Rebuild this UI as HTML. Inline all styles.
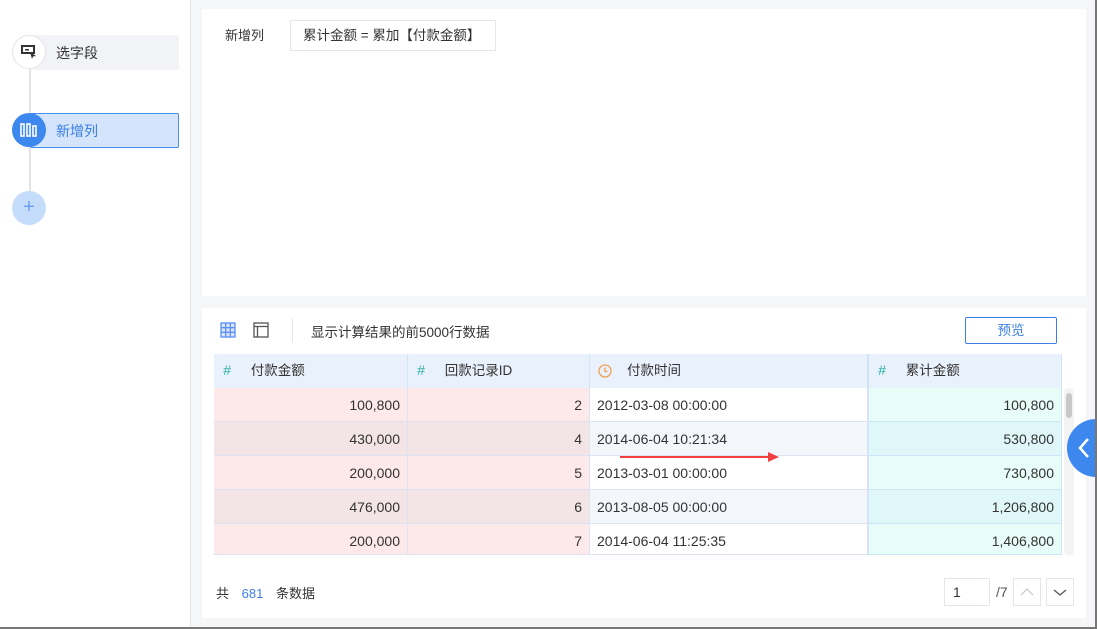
<!DOCTYPE html>
<html><head><meta charset="utf-8"><style>
*{margin:0;padding:0;box-sizing:border-box}
body{width:1097px;height:629px;position:relative;overflow:hidden;background:#f5f6f8;font-family:"Liberation Sans","Noto Sans CJK SC",sans-serif;font-size:13px;color:#333}
.abs{position:absolute}
.left{left:0;top:0;width:191px;height:629px;background:#fff;border-right:1px solid #e2e3e6}
.circ{position:absolute;border-radius:50%;width:34px;height:34px}
.cell{position:absolute;height:34px;line-height:34px;padding:0 7px;border-bottom:1px solid #dde3f3;border-right:1px solid #dde3f3;white-space:nowrap;font-size:14px}
.r{text-align:right}
.hd{position:absolute;top:354px;height:34px;line-height:33px;background:#e9f1fc;border-right:1px solid #d5e3f7;font-size:13.5px}
.hash{color:#2ab0a0;font-style:italic;margin:0 20px 0 9px;font-size:14px}
</style></head><body>
<div class="abs left">
 <div class="abs" style="left:29px;top:52px;width:2px;height:160px;background:#e4e4e6"></div>
 <div class="abs" style="left:30px;top:35px;width:149px;height:35px;background:#f2f3f6;border-radius:2px"></div>
 <div class="circ" style="left:12px;top:35px;background:#fff;border:1px solid #e4e4e6"></div>
 <svg class="abs" style="left:21px;top:44px" width="16" height="16"><rect x="1" y="2" width="12" height="7" fill="none" stroke="#333" stroke-width="2"/><rect x="4" y="5" width="4" height="1.5" fill="#333"/><path d="M9 8 L15 12 L12 12.5 L11 15 Z" fill="#333"/></svg>
 <div class="abs" style="left:56px;top:43px;font-size:14px;color:#333">选字段</div>
 <div class="abs" style="left:30px;top:113px;width:149px;height:35px;background:#d4e5fb;border:1px solid #4a8ff0;border-radius:2px"></div>
 <div class="circ" style="left:12px;top:113px;background:#3d88ee"></div>
 <svg class="abs" style="left:20px;top:121px" width="18" height="18"><g fill="none" stroke="#fff" stroke-width="1.6"><rect x="1" y="3" width="3" height="12"/><rect x="7" y="3" width="3" height="12"/><rect x="13" y="5" width="3" height="10"/></g></svg>
 <div class="abs" style="left:56px;top:121px;font-size:14px;color:#3a7ee6">新增列</div>
 <div class="circ" style="left:12px;top:191px;background:#c5dcfb;color:#6d9ff0;text-align:center;line-height:32px;font-size:20px;font-weight:300">+</div>
</div>
<div class="abs" style="left:202px;top:9px;width:884px;height:287px;background:#fff"></div>
<div class="abs" style="left:225px;top:25px;font-size:13px">新增列</div>
<div class="abs" style="left:290px;top:20px;width:206px;height:31px;border:1px solid #e4e6ea;line-height:29px;padding-left:12px;font-size:13.5px">累计金额 = 累加【付款金额】</div>
<div class="abs" style="left:202px;top:308px;width:884px;height:310px;background:#fff"></div>
<svg class="abs" style="left:220px;top:322px" width="16" height="16"><g fill="none" stroke="#5b8ef5" stroke-width="1.3"><rect x="1" y="1" width="14" height="14" fill="#dbe6fd"/><path d="M1 5.7H15M1 10.3H15M5.7 1V15M10.3 1V15"/></g></svg>
<svg class="abs" style="left:253px;top:322px" width="16" height="16"><g fill="none" stroke="#555" stroke-width="1.3"><rect x="1" y="1" width="14" height="14"/><path d="M1 4.5H15M4.5 4.5V15"/></g></svg>
<div class="abs" style="left:292px;top:318px;width:1px;height:24px;background:#e8e8ea"></div>
<div class="abs" style="left:311px;top:321px;font-size:13.5px">显示计算结果的前5000行数据</div>
<div class="abs" style="left:965px;top:317px;width:92px;height:27px;border:1px solid #3d7fe6;border-radius:2px;color:#3d7fe6;text-align:center;line-height:25px;font-size:13.5px">预览</div>

<div class="hd" style="left:214px;width:194px"><span class="hash">#</span>付款金额</div>
<div class="hd" style="left:408px;width:182px"><span class="hash">#</span>回款记录ID</div>
<div class="hd" style="left:590px;width:278px"><svg style="margin:0 15px -3px 8px" width="14" height="14"><circle cx="7" cy="7" r="6" fill="none" stroke="#f0a050" stroke-width="1.3"/><path d="M7 3.5V7.5H9.5" fill="none" stroke="#f0a050" stroke-width="1.3"/></svg>付款时间</div>
<div class="hd" style="left:868px;width:194px;border-left:1px solid #c7e2f5"><span class="hash">#</span>累计金额</div>

<div id="rows"></div>
<div class="abs" style="left:1064px;top:388px;width:10px;height:167px;background:#f3f3f3;border-radius:4px"></div>
<div class="abs" style="left:1066px;top:393px;width:6px;height:25px;background:#c8c8c8;border-radius:3px"></div>
<div class="abs" style="left:620px;top:456px;width:150px;height:2px;background:#f04040"></div>
<svg class="abs" style="left:768px;top:452px" width="12" height="10"><path d="M0 0L11 5L0 10Z" fill="#f04040"/></svg>
<div class="abs" style="left:1067px;top:419px;width:58px;height:58px;border-radius:50%;background:#3d88ee"></div>
<svg class="abs" style="left:1076px;top:437px" width="16" height="22"><path d="M12 2L4 11L12 20" fill="none" stroke="#fff" stroke-width="2.5"/></svg>

<div class="abs" style="left:216px;top:583px">共 <span style="color:#3d7fe6;margin:0 9px">681</span> 条数据</div>
<div class="abs" style="left:944px;top:578px;width:46px;height:28px;border:1px solid #e4e6ea;line-height:26px;padding-left:8px;font-size:14px">1</div>
<div class="abs" style="left:996px;top:584px;font-size:14px;color:#555">/7</div>
<div class="abs" style="left:1013px;top:578px;width:28px;height:28px;border:1px solid #e4e6ea"><svg width="26" height="26"><path d="M7 16L13 10L19 16" fill="none" stroke="#ccc" stroke-width="1.3"/></svg></div>
<div class="abs" style="left:1046px;top:578px;width:28px;height:28px;border:1px solid #e4e6ea"><svg width="26" height="26"><path d="M7 11L13 16L19 11" fill="none" stroke="#555" stroke-width="1.3"/></svg></div>
<div class="abs" style="left:1095px;top:0;width:2px;height:629px;background:#777"></div>
<div class="abs" style="left:0;top:627px;width:1097px;height:2px;background:#777"></div>
<script>
var d=[["100,800","2","2012-03-08 00:00:00","100,800"],["430,000","4","2014-06-04 10:21:34","530,800"],["200,000","5","2013-03-01 00:00:00","730,800"],["476,000","6","2013-08-05 00:00:00","1,206,800"],["200,000","7","2014-06-04 11:25:35","1,406,800"]];
var h="";d.forEach(function(r,i){var t=388+i*34,a=i%2;var hh=i==4?31:34;
var p=a?"#f3e4e6":"#fde9e9",w=a?"#f3f7fc":"#fff",g=a?"#dff7f8":"#e8fdf8";
h+='<div class="cell r" style="top:'+t+'px;height:'+hh+'px;left:214px;width:194px;background:'+p+'">'+r[0]+'</div>';
h+='<div class="cell r" style="top:'+t+'px;height:'+hh+'px;left:408px;width:182px;background:'+p+'">'+r[1]+'</div>';
h+='<div class="cell" style="top:'+t+'px;height:'+hh+'px;left:590px;width:278px;background:'+w+'">'+r[2]+'</div>';
h+='<div class="cell r" style="top:'+t+'px;height:'+hh+'px;left:868px;width:194px;background:'+g+';border-left:1px solid #c7e2f5;border-color:#cde6f7">'+r[3]+'</div>';});
document.getElementById("rows").innerHTML=h;
</script>
</body></html>
